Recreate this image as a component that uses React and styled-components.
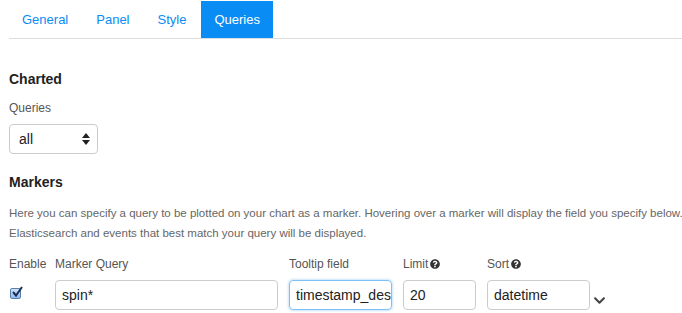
import React from 'react';
import styled, { createGlobalStyle } from 'styled-components';
import { FaQuestionCircle, FaChevronDown } from 'react-icons/fa';

const GlobalStyle = createGlobalStyle`
  body {
    margin: 0;
    background: #fff;
    font-family: "Liberation Sans", Arial, sans-serif;
    color: #333;
  }
`;

const Page = styled.div`
  padding: 1px 0 0 9px;
  width: 682px;
  height: 313px;
  box-sizing: border-box;
  overflow: hidden;
`;

const TabBar = styled.ul`
  display: flex;
  gap: 2px;
  margin: 0;
  padding: 0;
  list-style: none;
  border-bottom: 1px solid #ddd;
`;

const Tab = styled.li`
  height: 37px;
  padding: 0 13px;
  display: flex;
  align-items: center;
  font-size: 13px;
  color: ${p => (p.$active ? '#fff' : '#0a8cf5')};
  background: ${p => (p.$active ? '#0a8cf5' : 'transparent')};
  cursor: pointer;
`;

const Section = styled.h4`
  margin: ${p => p.$top || 32}px 0 0;
  font-size: 14px;
  font-weight: bold;
  color: #222;
  line-height: 17px;
`;

const Label = styled.label`
  display: flex;
  align-items: center;
  gap: 2px;
  font-size: 12px;
  color: #555;
  line-height: 14px;
  height: 14px;
`;

const FieldLabel = styled(Label)`
  margin-top: 13px;
`;

const SelectBox = styled.div`
  margin-top: 9px;
  width: 89px;
  height: 30px;
  box-sizing: border-box;
  border: 1px solid #ccc;
  border-radius: 4px;
  display: flex;
  align-items: center;
  justify-content: space-between;
  padding: 0 7px 0 9px;
  font-size: 14px;
  color: #222;
`;

const Help = styled.p`
  margin: 12px 0 0;
  font-size: 11.5px;
  line-height: 20px;
  color: #666;
  white-space: nowrap;
`;

const MarkerGrid = styled.div`
  display: grid;
  grid-template-columns: 35px 223px 103px 73px 103px 20px;
  column-gap: 11px;
  row-gap: 9px;
  margin-top: 14px;
  align-items: center;
`;

const Input = styled.div`
  height: 30px;
  box-sizing: border-box;
  border: 1px solid ${p => (p.$focus ? '#7ec1f7' : '#ccc')};
  box-shadow: ${p => (p.$focus ? '0 0 3px rgba(82,168,236,0.6)' : 'none')};
  border-radius: 4px;
  padding: 0 6px;
  display: flex;
  align-items: center;
  font-size: 14px;
  color: #222;
  overflow: hidden;
  white-space: nowrap;
`;

const Check = styled.span`
  width: 11px;
  height: 11px;
  margin-left: 1px;
  margin-top: -3px;
  box-sizing: border-box;
  border: 1px solid #5a7fa8;
  border-radius: 2px;
  background: linear-gradient(#cfe3fb, #8fbbef);
  position: relative;
`;

const CheckMark = styled.svg`
  position: absolute;
  left: 0px;
  top: -3px;
`;

const QIcon = styled(FaQuestionCircle)`
  font-size: 10px;
  color: #333;
`;

const Chevron = styled(FaChevronDown)`
  font-size: 13px;
  color: #444;
  margin-left: -8px;
  margin-top: 10px;
`;

export default function App() {
  return (
    <Page>
      <GlobalStyle />
      <TabBar>
        <Tab>General</Tab>
        <Tab>Panel</Tab>
        <Tab>Style</Tab>
        <Tab $active>Queries</Tab>
      </TabBar>

      <Section>Charted</Section>
      <FieldLabel>Queries</FieldLabel>
      <SelectBox>
        all
        <svg width="8" height="12" viewBox="0 0 8 12">
          <path d="M4 0 L8 5 L0 5 Z" fill="#222" />
          <path d="M4 12 L8 7 L0 7 Z" fill="#222" />
        </svg>
      </SelectBox>

      <Section $top={20}>Markers</Section>
      <Help>
        Here you can specify a query to be plotted on your chart as a marker. Hovering over a marker will display the field you specify below.
        <br />
        Elasticsearch and events that best match your query will be displayed.
      </Help>

      <MarkerGrid>
        <Label>Enable</Label>
        <Label>Marker Query</Label>
        <Label>Tooltip field</Label>
        <Label>Limit <QIcon /></Label>
        <Label>Sort <QIcon /></Label>
        <span />

        <Check>
          <CheckMark width="12" height="12" viewBox="0 0 12 12">
            <path d="M2 6 L5 9.5 L11 1" stroke="#1b2f52" strokeWidth="2" fill="none" />
          </CheckMark>
        </Check>
        <Input>spin*</Input>
        <Input $focus>timestamp_des</Input>
        <Input>20</Input>
        <Input>datetime</Input>
        <Chevron />
      </MarkerGrid>
    </Page>
  );
}
